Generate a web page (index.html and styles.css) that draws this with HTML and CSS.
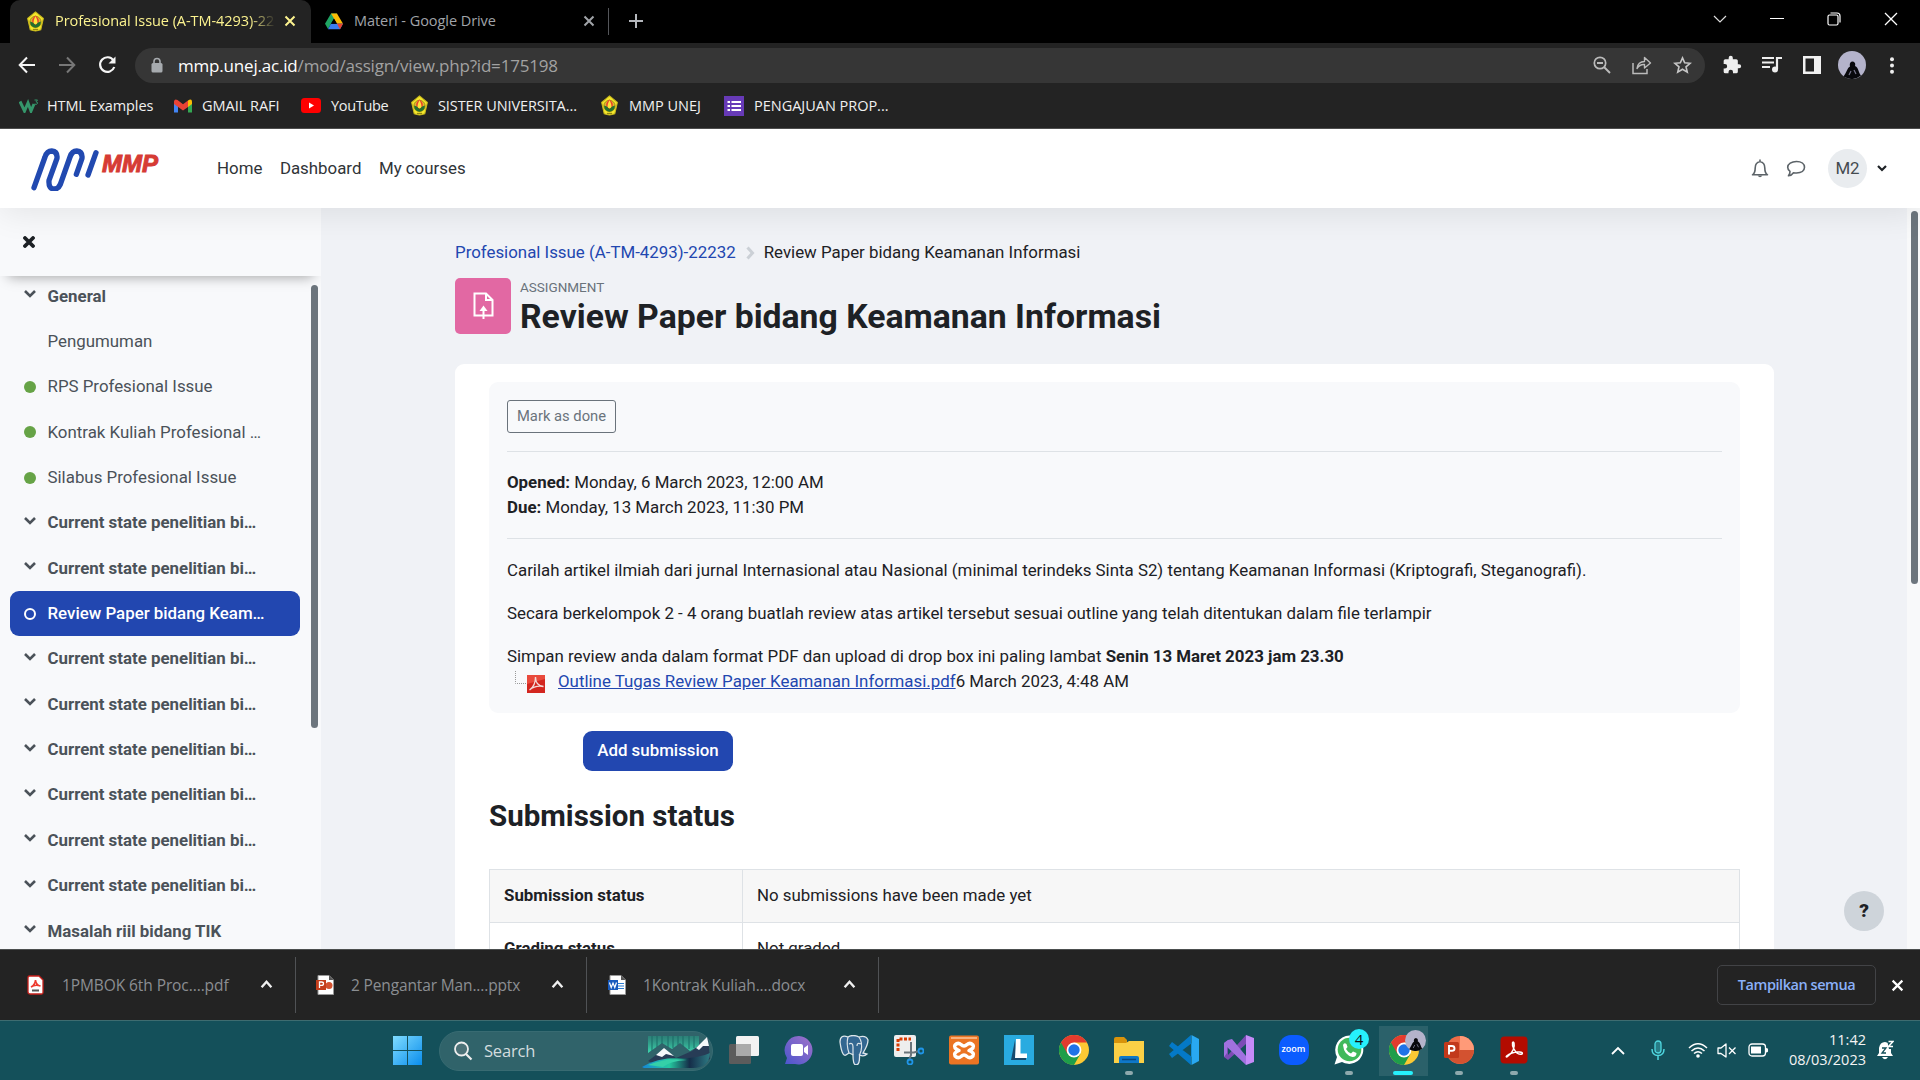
FILE: index.html
```html
<!DOCTYPE html>
<html lang="en">
<head>
<meta charset="utf-8">
<title>Profesional Issue (A-TM-4293)-22232</title>
<link rel="stylesheet" href="styles.css">
</head>
<body>
<svg class="defs" width="0" height="0" aria-hidden="true">
  <symbol id="emblem" viewBox="0 0 20 24">
    <path d="M10 1 L19 8.5 L16 21.5 Q10 24 4 21.5 L1 8.5Z" fill="#f5e92c" stroke="#c9b81c" stroke-width="1.2" stroke-linejoin="round"/>
    <circle cx="10" cy="12.5" r="6.5" fill="#e0b52c" stroke="#8d7a10" stroke-width=".8"/>
    <path d="M10 5C14 8 14.500 11 13 15L10 17L7 15C5.500 11 6 8 10 5Z" fill="#e8452c"/>
    <path d="M10 6Q13 11 12 15H8Q7 11 10 6Z" fill="#ffe53a"/>
    <path d="M3.800 12Q7 12 10 16Q13 12 16.200 12Q16 18.500 10 19Q4 18.500 3.800 12Z" fill="#22702e"/>
    <path d="M7 21H13" stroke="#8d7a10" stroke-width="1.2"/>
  </symbol>
  <symbol id="x" viewBox="0 0 12 12"><path d="M1.500 1.500L10.500 10.500M10.500 1.500L1.500 10.500" fill="none" stroke="currentColor" stroke-width="2"/></symbol>
  <symbol id="up" viewBox="0 0 12 12"><path d="M1.500 8.500L6 3.500L10.500 8.500" fill="none" stroke="currentColor" stroke-width="2.200"/></symbol>
  <symbol id="down" viewBox="0 0 14 10"><path d="M2 2L7 7L12 2" fill="none" stroke="currentColor" stroke-width="2.600"/></symbol>
  <symbol id="chrome" viewBox="0 0 30 30">
    <circle cx="15" cy="15" r="15" fill="#fcc934"/>
    <path d="M15 15L2 7.500A15 15 0 0 0 15 30L21.500 18.700Z" fill="#1e9e4a"/>
    <path d="M2 7.500A15 15 0 0 1 28 7.500H15L8.500 18.700Z" fill="#e33b2e"/>
    <circle cx="15" cy="15" r="7.400" fill="#fff"/><circle cx="15" cy="15" r="5.700" fill="#1f73e8"/>
  </symbol>
  <symbol id="person" viewBox="0 0 28 28">
    <circle cx="14" cy="14" r="14" fill="#b4b3cb"/>
    <path d="M5.500 25.500C9 21 9 17 12 15.500Q11 11 14.500 10.500Q18 11 17 15C21 17 20 21 23 24.500Q15 31 5.500 25.500Z" fill="#08080c"/>
    <path d="M11 24L13 20M18 23L16 19" stroke="#77768c" stroke-width="1.200"/>
  </symbol>
</svg>

<header class="browser">
  <div class="tabstrip">
    <div class="tab tab-active">
      <svg class="emblem"><use href="#emblem"/></svg>
      <span class="tab-title">Profesional Issue (A-TM-4293)-22</span>
      <svg class="tab-x"><use href="#x"/></svg>
    </div>
    <div class="tab tab-idle">
      <svg class="drive" viewBox="0 0 20 18"><path d="M6.700 0H13.300L10 5.800L3.400 17.300L0 11.500Z" fill="#1fa463"/><path d="M6.700 0H13.300L20 11.500H13.300Z" fill="#fbbc05"/><path d="M6.600 11.500H20L16.700 17.600H3.300Z" fill="#3b7def"/><path d="M13.300 11.500H20L16.700 17.500Z" fill="#e8432f"/><path d="M10 6L6.700 11.500H13.300Z" fill="#000"/></svg>
      <span class="tab-title">Materi - Google Drive</span>
      <svg class="tab-x"><use href="#x"/></svg>
    </div>
    <div class="newtab"><svg width="16" height="16"><path d="M8 1V15M1 8H15" stroke="#b5b8bd" stroke-width="2"/></svg></div>
    <div class="winctl">
      <span><svg width="14" height="9"><path d="M1 1L7 7L13 1" fill="none" stroke="#ddd" stroke-width="1.200"/></svg></span>
      <span><svg width="14" height="2"><path d="M0 .5H14" stroke="#fff"/></svg></span>
      <span><svg width="14" height="14"><rect x="1" y="3" width="10" height="10" rx="1.500" fill="none" stroke="#fff" stroke-width="1.200"/><path d="M3.500 1H10Q13 1 13 4V10.500" fill="none" stroke="#fff" stroke-width="1.200"/></svg></span>
      <span><svg width="14" height="14"><path d="M1 1L13 13M13 1L1 13" stroke="#fff" stroke-width="1.300"/></svg></span>
    </div>
  </div>
  <div class="toolbar">
    <span class="tool"><svg width="18" height="18"><path d="M17 9H2M9 1.500L1.700 9L9 16.500" fill="none" stroke="#f5f5f5" stroke-width="2"/></svg></span>
    <span class="tool"><svg width="18" height="18"><path d="M1 9H16M9 1.500L16.300 9L9 16.500" fill="none" stroke="#777" stroke-width="2"/></svg></span>
    <span class="tool"><svg width="20" height="20"><path d="M16.500 5.500A7.300 7.300 0 1 0 17.300 12" fill="none" stroke="#f5f5f5" stroke-width="2.200"/><path d="M18.500 1.500V8.500H11.500Z" fill="#f5f5f5"/></svg></span>
    <div class="omnibox">
      <svg class="lock" width="12" height="16"><rect x=".5" y="6" width="11" height="9.500" rx="1.500" fill="#a7abaf"/><path d="M3 7V4.500A3 3 0 0 1 9 4.500V7" fill="none" stroke="#a7abaf" stroke-width="1.600"/></svg>
      <span class="url"><b>mmp.unej.ac.id</b>/mod/assign/view.php?id=175198</span>
      <span class="tool"><svg width="18" height="18"><circle cx="7" cy="7" r="5.700" fill="none" stroke="#bbb" stroke-width="1.700"/><path d="M4 7H10M11 11L17 17" stroke="#bbb" stroke-width="1.900"/></svg></span>
      <span class="tool"><svg width="20" height="20"><path d="M1 8V18.500H15V14" fill="none" stroke="#bbb" stroke-width="1.500"/><path d="M5 13.500Q6 6.500 12.500 6.500V2.500L18.500 8L12.500 13V9.500Q8 9 5 13.500Z" fill="none" stroke="#bbb" stroke-width="1.400" stroke-linejoin="round"/></svg></span>
      <span class="tool"><svg width="19" height="18" viewBox="0 0 20 19"><path d="M10 2L12.300 7.200L18 7.700L13.700 11.400L15 17L10 14L5 17L6.300 11.400L2 7.700L7.700 7.200Z" fill="none" stroke="#c6c6c6" stroke-width="1.700"/></svg></span>
    </div>
    <span class="tool"><svg width="20" height="20" viewBox="0 0 24 24"><path d="M20.500 11H19V7a2 2 0 0 0-2-2h-4V3.500a2.500 2.500 0 0 0-5 0V5H4a2 2 0 0 0-2 2v3.800h1.500a2.700 2.700 0 0 1 0 5.400H2V20a2 2 0 0 0 2 2h3.800v-1.500a2.700 2.700 0 0 1 5.400 0V22H17a2 2 0 0 0 2-2v-4h1.500a2.500 2.500 0 0 0 0-5z" fill="#eee"/></svg></span>
    <span class="tool"><svg width="20" height="18"><path d="M0 2H12M0 6.500H12M0 11H8" stroke="#eee" stroke-width="1.900"/><path d="M15 13V2H20" stroke="#eee" stroke-width="2.200" fill="none"/><circle cx="13" cy="13.500" r="3" fill="#eee"/></svg></span>
    <span class="tool"><svg width="18" height="18"><path d="M0 0H18V18H0ZM2.500 2.500V15.500H11V2.500Z" fill="#f1f1f1" fill-rule="evenodd"/></svg></span>
    <span class="tool"><svg width="28" height="28"><use href="#person"/></svg></span>
    <span class="tool"><svg width="4" height="17"><circle cx="2" cy="2.300" r="2" fill="#eee"/><circle cx="2" cy="8.500" r="2" fill="#eee"/><circle cx="2" cy="14.700" r="2" fill="#eee"/></svg></span>
  </div>
  <nav class="bookmarks">
    <span class="bm bm-w3"><svg width="20" height="14"><path d="M1 2.500L5.500 12L9 4L12 12L15 5" fill="none" stroke="#35976b" stroke-width="3"/><path d="M15.500 1H18.500L17 2.800Q19 3 18.500 4.500Q17.500 6 15.500 5" fill="none" stroke="#35976b"/></svg>HTML Examples</span>
    <span class="bm bm-gm"><svg width="18" height="14"><path d="M0 2V13.500H4V6Z" fill="#4285f4"/><path d="M18 2V13.500H14V6Z" fill="#34a853"/><path d="M14 1.500Q18-1 18 3V5L14 8Z" fill="#fbbc04"/><path d="M0 5V2.500Q.5-.5 3.500 1L9 5.200L14 1.500V8L9 11.500Z" fill="#ea4335"/></svg>GMAIL RAFI</span>
    <span class="bm bm-yt"><svg width="20" height="15"><rect width="20" height="15" rx="3.500" fill="#f00"/><path d="M8 4.500V10.500L13 7.500Z" fill="#fff"/></svg>YouTube</span>
    <span class="bm bm-si"><svg class="emblem"><use href="#emblem"/></svg>SISTER UNIVERSITA...</span>
    <span class="bm bm-mm"><svg class="emblem"><use href="#emblem"/></svg>MMP UNEJ</span>
    <span class="bm bm-pr"><svg width="20" height="20"><path d="M0 0H20V20H0Z" fill="#673ab7"/><path d="M3.500 6H6M3.500 10H6M3.500 14H6M7.500 6H17M7.500 10H17M7.500 14H17" stroke="#fff" stroke-width="2.200"/></svg>PENGAJUAN PROP...</span>
  </nav>
</header>

<div class="page">
  <header class="navbar">
    <div class="brand"><svg width="68" height="44" viewBox="0 0 204 132"><path d="M9 122L42 30Q48 12 62 12Q80 14 78 34L54 100Q52 126 70 126Q82 126 88 112L117 30Q123 12 137 12Q155 14 153 34L136 82M195 17L171 84" fill="none" stroke="#2149b0" stroke-width="16" stroke-linecap="round" stroke-linejoin="round"/></svg><span>MMP</span></div>
    <a>Home</a><a>Dashboard</a><a>My courses</a>
    <div class="userbar">
      <svg width="18" height="20"><path d="M9 2.500Q4.200 3.500 4.200 9Q4.200 14 1.500 15.800H16.500Q13.800 14 13.800 9Q13.800 3.500 9 2.500ZM9 .5V3" fill="none" stroke="#5c6368" stroke-width="1.600" stroke-linejoin="round"/><path d="M6.500 16.500Q9 20 11.500 16.500Z" fill="#5c6368"/></svg>
      <svg class="bubble" width="20" height="18"><path d="M10.500 1.500C15.500 1.500 18.500 4 18.500 7.300C18.500 10.500 15.500 13 10.500 13Q9 13 7.500 12.700Q5.500 15.500 2.500 15.800Q4.200 13.500 4 11.300Q1.700 9.700 1.700 7.300C1.700 4 5.500 1.500 10.500 1.500Z" fill="none" stroke="#5c6368" stroke-width="1.600" stroke-linejoin="round"/></svg>
      <span class="initials">M2</span>
      <svg class="ucaret" width="10" height="7"><path d="M1 1L5 5L9 1" fill="none" stroke="#1d2125" stroke-width="2.200"/></svg>
    </div>
  </header>
  <div class="body">
    <aside class="drawer">
      <div class="drawer-head"><svg width="12" height="12"><path d="M2 2L10 10M10 2L2 10" stroke="#1d2125" stroke-width="3.800" stroke-linecap="round"/></svg></div>
      <div class="drawer-body">
        <ul class="index">
          <li class="sec"><svg><use href="#down"/></svg>General</li>
          <li><i></i>Pengumuman</li>
          <li><i class="dot"></i>RPS Profesional Issue</li>
          <li><i class="dot"></i>Kontrak Kuliah Profesional …</li>
          <li><i class="dot"></i>Silabus Profesional Issue</li>
          <li class="sec"><svg><use href="#down"/></svg>Current state penelitian bi…</li>
          <li class="sec"><svg><use href="#down"/></svg>Current state penelitian bi…</li>
          <li class="current"><i class="ring"></i>Review Paper bidang Keam…</li>
          <li class="sec"><svg><use href="#down"/></svg>Current state penelitian bi…</li>
          <li class="sec"><svg><use href="#down"/></svg>Current state penelitian bi…</li>
          <li class="sec"><svg><use href="#down"/></svg>Current state penelitian bi…</li>
          <li class="sec"><svg><use href="#down"/></svg>Current state penelitian bi…</li>
          <li class="sec"><svg><use href="#down"/></svg>Current state penelitian bi…</li>
          <li class="sec"><svg><use href="#down"/></svg>Current state penelitian bi…</li>
          <li class="sec"><svg><use href="#down"/></svg>Masalah riil bidang TIK</li>
        </ul>
        <div class="drawer-thumb"></div>
      </div>
    </aside>
    <main class="main">
      <nav class="crumbs"><a>Profesional Issue (A-TM-4293)-22232</a><svg width="9" height="14"><path d="M1.500 1.500L6.500 7L1.500 12.500" fill="none" stroke="#cbd0d6" stroke-width="3"/></svg><span>Review Paper bidang Keamanan Informasi</span></nav>
      <div class="heading">
        <div class="modicon"><svg width="21" height="28"><path d="M10 23.500H1.500V1.500H13L19.500 8V23.500H10.500M13 1.500V8H19.500" fill="none" stroke="#fff" stroke-width="2"/><path d="M10.500 27V17" stroke="#fff" stroke-width="2"/><path d="M6.500 19L10.500 13.500L14.500 19Z" fill="#fff"/></svg></div>
        <div><div class="kind">ASSIGNMENT</div><h1>Review Paper bidang Keamanan Informasi</h1></div>
      </div>
      <section class="card">
        <div class="info">
          <button class="done">Mark as done</button>
          <div class="dates"><div><b>Opened:</b> Monday, 6 March 2023, 12:00 AM</div><div><b>Due:</b> Monday, 13 March 2023, 11:30 PM</div></div>
          <p>Carilah artikel ilmiah dari jurnal Internasional atau Nasional (minimal terindeks Sinta S2) tentang Keamanan Informasi (Kriptografi, Steganografi).</p>
          <p>Secara berkelompok 2 - 4 orang buatlah review atas artikel tersebut sesuai outline yang telah ditentukan dalam file terlampir</p>
          <div class="last">Simpan review anda dalam format PDF dan upload di drop box ini paling lambat <b>Senin 13 Maret 2023 jam 23.30</b></div>
          <div class="file"><svg width="32" height="24"><path d="M.5 1V13.500H12" fill="none" stroke="#999" stroke-dasharray="1 1"/><path d="M12 5H30V23H12Z" fill="#d3261f"/><path d="M12 5H30V9L12 14Z" fill="#e94a3c"/><path d="M14.500 20C19 17 20.500 12 20.500 7C20.500 12 23 16 28.500 16.500C23 15.500 18 17 14.500 20" fill="none" stroke="#f3dcda" stroke-width="1.300"/></svg><a>Outline Tugas Review Paper Keamanan Informasi.pdf</a><span>6 March 2023, 4:48 AM</span></div>
        </div>
        <button class="add">Add submission</button>
        <h2>Submission status</h2>
        <table><tr><th>Submission status</th><td>No submissions have been made yet</td></tr><tr><th>Grading status</th><td>Not graded</td></tr></table>
      </section>
    </main>
    <div class="scroll"><div></div></div>
    <div class="help">?</div>
  </div>
</div>

<footer class="downloads">
  <div class="dl dl-pdf"><svg width="18" height="20"><path d="M2.500 1H12L16 5V17.500Q16 19 14.500 19H3.500Q1 19 1 17V3Q1 1 2.500 1Z" fill="#fff" stroke="#c8211c" stroke-width="1.300"/><path d="M4 12Q8 10 8.500 5Q9 10 13.500 11Q8 9 4 12" fill="none" stroke="#ed3b2f" stroke-width="1.600"/><path d="M5 15.500H12" stroke="#555" stroke-width="2"/></svg><span>1PMBOK 6th Proc....pdf</span><svg class="dl-up"><use href="#up"/></svg></div>
  <div class="dl dl-ppt"><svg width="18" height="20"><path d="M2 .5H13L17.500 5V19.500H2Z" fill="#fff" stroke="#999"/><path d="M13 .5V5H17.500" fill="#555"/><circle cx="13" cy="10.500" r="3.500" fill="#d35230"/><rect y="5" width="10" height="10" fill="#c43e1c"/><path d="M3.500 13V7H5.500Q7.500 7 7.500 8.700Q7.500 10.400 5.500 10.400H3.500" fill="none" stroke="#fff" stroke-width="1.300"/></svg><span>2 Pengantar Man....pptx</span><svg class="dl-up"><use href="#up"/></svg></div>
  <div class="dl dl-doc"><svg width="18" height="20"><path d="M2 .5H13L17.500 5V19.500H2Z" fill="#fff" stroke="#999"/><path d="M13 .5V5H17.500" fill="#555"/><path d="M10 8.500H16M10 11H16M10 13.500H16" stroke="#2b7cd3" stroke-width="1.200"/><rect y="5" width="10" height="10" fill="#185abd"/><path d="M1.500 7.500L3.200 12.500L5 8L6.800 12.500L8.500 7.500" fill="none" stroke="#fff" stroke-width="1.200"/></svg><span>1Kontrak Kuliah....docx</span><svg class="dl-up"><use href="#up"/></svg></div>
  <button class="showall">Tampilkan semua</button>
  <svg class="dl-x"><use href="#x"/></svg>
</footer>

<footer class="taskbar">
  <svg class="start" width="30" height="30"><defs><linearGradient id="wg" x1="0" y1="0" x2="1" y2="1"><stop stop-color="#7fdcff"/><stop offset="1" stop-color="#0a8dec"/></linearGradient></defs><path d="M0 0H14V14H0ZM15 0H29V14H15ZM0 15H14V29H0ZM15 15H29V29H15Z" fill="url(#wg)"/></svg>
  <div class="search">
    <svg width="20" height="20"><circle cx="8.500" cy="8" r="6.500" fill="#4b7177" stroke="#eee" stroke-width="1.800"/><path d="M13 13L18.500 18.500" stroke="#eee" stroke-width="2.200"/></svg>
    <span>Search</span>
    <svg class="art" width="70" height="36"><defs><linearGradient id="au" x1="0" y1="1" x2="0" y2="0"><stop stop-color="#3edbb0"/><stop offset="1" stop-color="#2a9c86" stop-opacity=".5"/></linearGradient><linearGradient id="sea"><stop stop-color="#1487d8"/><stop offset=".4" stop-color="#25c9a0"/><stop offset=".7" stop-color="#152d49"/><stop offset="1" stop-color="#2d7a83"/></linearGradient></defs><path d="M6 3H57V13L48 18L38 10L30 16L20 10L6 20Z" fill="url(#au)"/><path d="M10 3V18M15 3V14M20 3V11M26 3V14M31 3V15M36 3V12M41 3V14M47 3V16M52 3V15" stroke="#1b6a66" stroke-width="1"/><path d="M6 28L22 16L34 25L50 18L66 5L68 26L60 30H10Z" fill="#273c56"/><path d="M14 22L22 15L32 23L24 21L20 24ZM54 15L65 4L67 13L61 13L57 17Z" fill="#f4f8fa"/><path d="M0 34Q14 25 36 25Q55 26 68 20Q67 35 51 35H2Z" fill="url(#sea)"/><path d="M6 32Q26 24 45 27Q28 28 21 34" fill="#35d0a8"/></svg>
  </div>
  <div class="apps">
    <span><svg width="30" height="30"><rect y="9" width="22" height="20" rx="1.500" fill="#5c5c5c"/><rect x="7" y="1" width="23" height="20" rx="1.500" fill="#f2f2f2"/><path d="M7 9H22V21H7Z" fill="#aaa"/></svg></span>
    <span><svg width="30" height="30"><defs><linearGradient id="cg" x1="1" y1="0" x2="0" y2="1"><stop stop-color="#a173c9"/><stop offset="1" stop-color="#4b55cd"/></linearGradient></defs><path d="M15 1A14.200 14.200 0 1 1 11 29H1L3 23A14.200 14.200 0 0 1 15 1Z" fill="url(#cg)"/><rect x="7" y="9" width="12" height="12" rx="2" fill="#fff"/><path d="M20 13L24 10V20L20 17Z" fill="#fff"/></svg></span>
    <span><svg width="30" height="30"><path d="M9 2Q1-1 1 7Q3 22 7 20L10 18Q13 19 14 20Q14 30 17 30Q21 30 20.500 20Q25 22 28 19L24 18Q29 10 29 5Q27 0 20 2Q14-1 9 2Z" fill="#336791" stroke="#dce5ea" stroke-width="1.300"/><path d="M9 2Q7 9 10 18M20 2Q24 8 22 16L20.500 20M10 9Q14 7 14 12V20M22 9Q18 7 18 11" fill="none" stroke="#dce5ea" stroke-width="1.200"/></svg></span>
    <span><svg width="30" height="30"><rect width="22" height="22" rx="2" fill="#eee"/><path d="M4 16V4H17" fill="none" stroke="#d83b01" stroke-width="3" stroke-dasharray="3 1.500"/><path d="M17 7V20L15 25M10 17.500H20L25 16" fill="none" stroke="#6a747b" stroke-width="2"/><circle cx="27" cy="16" r="2.500" fill="none" stroke="#2095e8" stroke-width="1.800"/><circle cx="16" cy="27" r="2.500" fill="none" stroke="#2095e8" stroke-width="1.800"/></svg></span>
    <span><svg width="30" height="30"><rect y=".5" width="30" height="29" rx="2" fill="#eb7423"/><path d="M2 3H28" stroke="#f7b17c" stroke-width="2"/><path d="M10 15.500Q4 13 6 10Q9 7 12 9.500Q15 12.500 18 9.500Q21 7 24 10Q26 13 20 15.500Q26 18 24 21Q21 24 18 21.500Q15 18.500 12 21.500Q9 24 6 21Q4 18 10 15.500Z" fill="none" stroke="#fff" stroke-width="3.500" stroke-linejoin="round"/></svg></span>
    <span><svg width="30" height="30"><path d="M0 0H30V30H0Z" fill="#29abe0"/><path d="M11 5L7 25H22V22H13Z" fill="#184a6e"/><path d="M12 4H16.500V18.500H23V23H11Z" fill="#fff"/></svg></span>
    <span><svg width="30" height="30"><use href="#chrome"/></svg></span>
    <span class="run"><svg width="30" height="30"><path d="M0 4Q0 2 2 2H10L13 5V10H0Z" fill="#d8930b"/><path d="M0 8H12L15 6H30V28H0Z" fill="#fbd046"/><path d="M5 28V23Q5 21 7 21H23Q25 21 25 23V28Z" fill="#0f78c8"/><path d="M8 24.500H22" stroke="#0a477f" stroke-width="1.500"/></svg></span>
    <span><svg width="30" height="30"><path d="M22 0L0 19L3 23L23 8V22L3 7L0 11L22 30Z" fill="#0479c7"/><path d="M22.500 0L30 4V26L22.500 30Z" fill="#29a8f2"/></svg></span>
    <span><svg width="30" height="30"><path d="M22 0L30 3V27L22 30Z" fill="#c58bf8"/><path d="M22 0V9L4 25L0 22V8L4 5V20Z" fill="#7b4bb5"/><path d="M0 8L4 5L8 4L22 21V30L3 12V18L0 22Z" fill="#a071df"/></svg></span>
    <span><b class="zoom">zoom</b></span>
    <span class="run"><svg width="30" height="30"><path d="M15.500.5A14.200 14.200 0 1 1 8 27L.5 29.500L3 22A14.500 14.500 0 0 1 15.500.5Z" fill="#fff"/><circle cx="15.500" cy="14.500" r="11.800" fill="#40b95a"/><path d="M9 10Q10 7 12.500 9L13.500 12L12 14Q14 17.500 17 18.500L19 16.500L22.500 18Q22.500 22 18.500 22Q10 20 9 10Z" fill="#fff"/></svg><em>4</em></span>
    <span class="run active"><svg width="30" height="30"><use href="#chrome"/></svg><svg class="mini" width="21" height="21"><use href="#person"/></svg></span>
    <span class="run"><svg width="30" height="30"><circle cx="16" cy="15" r="14" fill="#ed6c47"/><path d="M16 1A14 14 0 0 1 30 15H16Z" fill="#ff9a78"/><path d="M30 15A14 14 0 0 1 4 22L16 15Z" fill="#d35230"/><rect y="7" width="15" height="16" rx="1.500" fill="#c2391b"/><path d="M5 19.500V11H8Q10.500 11 10.500 13.500Q10.500 15.800 8 15.800H5" fill="none" stroke="#fff" stroke-width="1.900"/></svg></span>
    <span class="run"><svg width="30" height="30"><rect x="1.500" y="1.500" width="27" height="27" rx="4" fill="#b30b00"/><path d="M8 22C14 18 16 12 15 8C14 5 12 9 15 14C17 18 20 20 23 19C25 17 18 16 13 18C8 20 6 22 8 22" fill="none" stroke="#fff" stroke-width="1.500"/></svg></span>
  </div>
  <div class="tray">
    <svg class="t-up" width="14" height="9"><path d="M1 8L7 2L13 8" fill="none" stroke="#fff" stroke-width="1.800"/></svg>
    <svg class="t-mic" width="14" height="20"><rect x="4" y="1" width="6" height="12" rx="3" fill="#287c86" stroke="#4fd6df" stroke-width="1.300"/><path d="M1 9Q1 15.500 7 15.500Q13 15.500 13 9M7 16V20" fill="none" stroke="#4fd6df" stroke-width="1.500"/></svg>
    <svg class="t-wifi" width="20" height="16"><path d="M1 6Q10-2.500 19 6M3.500 9Q10 3 16.500 9M6 11.500Q10 8 14 11.500" fill="none" stroke="#fff" stroke-width="1.500"/><circle cx="10" cy="14" r="1.800" fill="#fff"/></svg>
    <svg class="t-vol" width="20" height="15"><path d="M1 5H4L9 1V14L4 10.500H1Z" fill="none" stroke="#fff" stroke-width="1.300" stroke-linejoin="round"/><path d="M12 4.500L18.500 11M18.500 4.500L12 11" stroke="#fff" stroke-width="1.300"/></svg>
    <svg class="t-bat" width="21" height="14"><rect x="1" y="1" width="16.500" height="12" rx="3" fill="none" stroke="#fff" stroke-width="1.300"/><path d="M3 3.500H13V10.500H3Z" fill="#fff"/><path d="M18 5Q20.500 5 20 7Q20.500 9.500 18 9.500Z" fill="#fff"/></svg>
    <div class="clock"><div>11:42</div><div>08/03/2023</div></div>
    <svg width="18" height="20"><path d="M1 16L3 13V8Q4 2 9 2Q15 3 15 8V13L17 16ZM6 17H12Q9 21.500 6 17Z" fill="#fff"/><path d="M6 8H10L6 13H10" fill="none" stroke="#14505a" stroke-width="1.300"/><path d="M11 0H18V9H13Z" fill="#14505a"/><path d="M12.500 1.500H17L12.500 6.500H17" fill="none" stroke="#fff" stroke-width="1.500"/></svg>
  </div>
</footer>
</body>
</html>
```
FILE: styles.css
```css
* { box-sizing: border-box; }
svg { display: block; flex: none; }
body { margin: 0; width: 1920px; height: 1080px; overflow: hidden; display: flex; flex-direction: column; font-family: Roboto, sans-serif; }
.defs { position: absolute; }
button { font: inherit; }

/* Browser chrome */
.browser { flex: none; height: 129px; background: #232323; border-bottom: 1px solid #4d4d4d; font-family: "Open Sans", "Noto Sans", sans-serif; }
.tabstrip { height: 43px; background: #000; display: flex; padding-left: 10px; }
.tab { display: flex; align-items: center; height: 43px; padding-bottom: 1px; font-size: 14.5px; letter-spacing: -.06px; white-space: nowrap; }
.tab-active { width: 301px; padding-left: 16px; background: #232323; border-radius: 10px 10px 0 0; color: #fcf38f; }
.tab-active .tab-title { width: 221px; margin-left: 10px; overflow: hidden; -webkit-mask-image: linear-gradient(90deg, #000 88%, transparent); mask-image: linear-gradient(90deg, #000 88%, transparent); }
.tab-title { padding-bottom: 1px; }
.tab-x { width: 12px; height: 12px; margin-left: 8px; }
.emblem { width: 19px; height: 21px; }
.tab-idle { width: 298px; padding-left: 14px; color: #a1a4a9; border-right: 1px solid transparent; border-image: linear-gradient(transparent 21%, #54565a 21%, #54565a 79%, transparent 79%) 1; }
.tab-idle .tab-title { width: 218px; margin-left: 11px; }
.drive { width: 18px; height: 17px; }
.tab-idle .tab-x { margin-left: 11px; }
.newtab { width: 54px; display: grid; place-items: center; padding-bottom: 1px; }
.winctl { margin: 0 1px 0 auto; display: flex; height: 38px; }
.winctl span { width: 57px; display: grid; place-items: center; }
.toolbar { height: 44px; display: flex; align-items: center; padding: 0 8px 0 7px; }
.tool { width: 40px; height: 35px; display: grid; place-items: center; flex: none; }
.omnibox { flex: 1; height: 35px; margin: 0 7px 0 8px; padding: 0 3px 0 16px; border-radius: 18px; background: #363636; display: flex; align-items: center; color: #a2a2a2; font-size: 17px; }
.url { flex: 1; margin-left: 15px; letter-spacing: -.19px; }
.url b { font-weight: 400; color: #fff; }
.bookmarks { height: 38px; display: flex; align-items: center; padding: 0 0 1px 19px; color: #f0f0f0; font-size: 14.5px; letter-spacing: -.02px; line-height: 20px; white-space: nowrap; }
.bm { display: flex; align-items: center; gap: 8px; flex: none; }
.bm-w3 { width: 155px; letter-spacing: -.12px; }
.bm-gm { width: 127px; gap: 10px; }
.bm-yt { width: 109px; gap: 10px; letter-spacing: -.32px; }
.bm-si { width: 190px; gap: 9px; letter-spacing: -.08px; }
.bm-mm { width: 124px; gap: 10px; }
.bm-pr { gap: 10px; }

/* Site */
.page { flex: 1; min-height: 0; display: flex; flex-direction: column; overflow: hidden; background: #f0f2f6; color: #1d2125; font-size: 16.875px; line-height: 25.3px; }
.navbar { flex: none; height: 79px; background: #fff; display: flex; align-items: center; padding-left: 31px; z-index: 3; box-shadow: 0 4px 34px rgba(0,0,0,.09); position: relative; color: #303438; }
.navbar a { margin-right: 17.5px; padding-top: 1px; }
.brand { width: 186px; display: flex; color: #d63b34; }
.brand span { margin: 2px 0 0 3px; font: italic 700 24px/29px "Liberation Sans", sans-serif; -webkit-text-stroke: 1px #d63b34; }
.userbar { margin-left: auto; display: flex; align-items: center; padding-right: 33px; }
.bubble { margin-left: 17px; }
.initials { width: 39px; height: 39px; margin-left: 22px; border-radius: 50%; background: #e9ecef; display: grid; place-items: center; color: #454b50; }
.ucaret { margin-left: 10px; }
.body { flex: 1; min-height: 0; display: flex; position: relative; }
.drawer { width: 321px; background: #f8f9fb; flex: none; display: flex; flex-direction: column; overflow: hidden; }
.drawer-head { height: 68px; flex: none; padding: 28px 0 0 23px; background: #f8f9fb; box-shadow: 0 9px 12px -8px rgba(0,0,0,.35); z-index: 1; }
.drawer-body { display: flex; min-height: 0; }
.index { list-style: none; margin: -3px 0 0; padding: 0 0 0 10px; width: 311px; flex: none; color: #4b5259; }
.index li { width: 290px; height: 45.360px; display: flex; align-items: center; padding: 1px 0 0 13.500px; white-space: nowrap; }
.index svg { width: 14px; height: 10px; margin: -4px 11px 0 -1px; }
.index i { width: 12px; height: 12px; margin-right: 12px; border-radius: 50%; }
.index .sec { font-weight: 700; }
.index .dot { background: #66a346; }
.index .ring { border: 2px solid #fff; }
.index .current { background: #2247b0; color: #fff; border-radius: 9px; font-weight: 500; }
.drawer-thumb { width: 7px; height: 443px; margin-top: 9px; border-radius: 4px; background: #6c757d; }
.main { width: 1453px; padding: 32px 0 0 134px; flex: none; }
.crumbs { display: flex; align-items: center; height: 25px; white-space: nowrap; }
.crumbs a { color: #2247b0; }
.crumbs svg { margin: 0 9px 0 10px; }
.heading { display: flex; gap: 9px; height: 99px; padding-top: 13px; white-space: nowrap; }
.modicon { width: 56px; height: 56px; border-radius: 5px; background: #e268a3; display: grid; place-items: center; }
.kind { font-size: 13.500px; line-height: 19px; color: #6a737b; }
h1 { margin: 0; font-size: 33.750px; line-height: 40px; font-weight: 700; }
.card { background: #fff; border-radius: 9px; height: 700px; padding: 18px 34px; }
.info { height: 331px; background: #f8f9fb; border-radius: 9px; padding: 18px; }
.done { display: block; width: 109px; height: 33px; padding: 1px 0 0; background: #f8f9fb; border: 1px solid #6a737b; border-radius: 3px; color: #6a737b; font-size: 14.766px; }
.dates { margin-top: 18px; border: solid #dee2e6; border-width: 1px 0; padding-top: 18px; height: 88px; margin-bottom: 18.500px; }
p { margin: 0 0 18px; white-space: nowrap; }
.last b { font-weight: 700; }
.file { display: flex; align-items: center; padding-left: 8px; }
.file svg { margin: -1px 11px 0 0; }
.file a { color: #2247b0; text-decoration: underline; }
.add { display: block; margin: 18px 0 0 94px; width: 150px; height: 40px; border: 0; border-radius: 9px; background: #2247b0; color: #fff; font-weight: 500; padding: 0; }
h2 { margin: 27px 0 35px; font-size: 29.530px; line-height: 36px; font-weight: 700; }
table { width: 1251px; border-collapse: collapse; }
th, td { height: 53px; padding: 0 13px 0 14px; text-align: left; border: 1px solid #dee2e6; }
th { width: 253px; }
tr:first-child { background: #f7f7f7; }
.scroll { margin-left: auto; width: 13px; background: #f8f9fa; padding: 3px 2px 0 4px; }
.scroll div { height: 373px; border-radius: 4px; background: #6c757d; }
.help { position: absolute; right: 36px; bottom: 18px; width: 40px; height: 40px; border-radius: 50%; background: #ced4da; display: grid; place-items: center; font-size: 19px; font-weight: 900; }

/* Download shelf */
.downloads { flex: none; height: 71px; background: #232323; border-top: 1px solid #4c4f4f; display: flex; align-items: center; padding: 0 16px 0 3px; color: #8b8e92; font: 15.500px "Open Sans", sans-serif; letter-spacing: -.09px; }
.dl { height: 56px; padding-bottom: 1px; display: flex; align-items: center; border-right: 1px solid #505255; white-space: nowrap; }
.dl-pdf { width: 293px; padding-left: 24px; padding-right: 22px; }
.dl-ppt { width: 291px; padding-left: 20px; padding-right: 22px; letter-spacing: -.14px; }
.dl-doc { width: 292px; padding-left: 21px; padding-right: 22px; letter-spacing: -.14px; }
.dl span { margin-left: 17px; }
.dl-up { width: 13px; height: 13px; margin-left: auto; color: #f0f0f0; }
.showall { margin-left: auto; width: 159px; height: 40px; border: 1px solid #424346; border-radius: 5px; background: transparent; color: #8ab0f8; font-size: 14.500px; font-weight: 600; letter-spacing: -.45px; padding: 0 0 2px; }
.dl-x { width: 13px; height: 13px; margin-left: 15px; color: #fff; }

/* Taskbar */
.taskbar { flex: none; height: 60px; background: #14505a; border-top: 1px solid #3e6c70; display: flex; align-items: center; padding-left: 393px; color: #f4f4f4; font-family: "Open Sans", sans-serif; }
.search { width: 274px; height: 40px; margin-left: 16px; border-radius: 20px; background: #30636a; border: 1px solid #386b72; display: flex; align-items: center; padding-left: 13px; color: #d3dddf; font-size: 16.500px; letter-spacing: -.2px; flex: none; }
.search span { margin-left: 11px; }
.art { margin-left: auto; }
.apps { display: flex; margin-left: 3px; }
.apps > span { width: 55px; height: 50px; flex: none; display: grid; place-items: center; position: relative; padding-bottom: 1px; }
.zoom { width: 30px; height: 30px; border-radius: 12px; background: #0b5cff; color: #fff; font: 600 9px/28px "Open Sans", sans-serif; text-align: center; }
.run::after { content: ""; position: absolute; bottom: 1px; left: 24px; width: 8px; height: 4px; border-radius: 2px; background: #8ea9ad; }
.active { background: linear-gradient(#2b616a, #2b616a) center / 49px 50px no-repeat; }
.active::after { left: 17px; width: 20px; background: #26f1fc; }
em { position: absolute; left: 28px; top: 3px; width: 20px; height: 20px; border-radius: 50%; background: #26f1fc; color: #111; font: 15px/20px "Open Sans", sans-serif; text-align: center; }
.mini { position: absolute; left: 29px; top: 4px; }
.tray { margin-left: auto; display: flex; align-items: center; padding: 0 26px 1px 0; }
.t-mic { margin-left: 26px; }
.t-wifi { margin-left: 23px; }
.t-vol { margin-left: 9px; }
.t-bat { margin-left: 11px; }
.clock { width: 97px; text-align: right; font-size: 14.500px; line-height: 20px; letter-spacing: 0; margin-right: 10px; padding-bottom: 1px; }
```
